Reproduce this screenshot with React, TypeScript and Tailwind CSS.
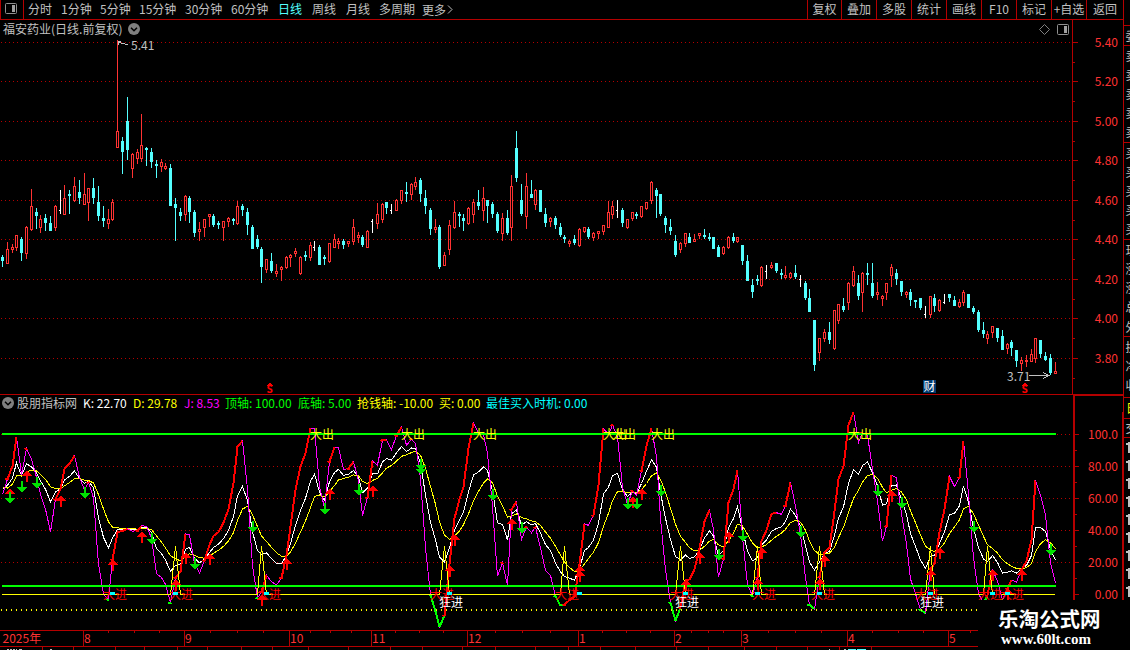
import React from 'react';
import clsx from 'clsx';

type Candle = [kind: string, high: number, top: number, bottom: number, low: number];

const periods = ['分时', '1分钟', '5分钟', '15分钟', '30分钟', '60分钟', '日线', '周线', '月线', '多周期'];
const periodWidths = ['w-[33px]', 'w-[39px]', 'w-[39px]', 'w-[46px]', 'w-[46px]', 'w-[47px]', 'w-[34px]', 'w-[34px]', 'w-[33px]', 'w-[43px]'];
const tools = ['复权', '叠加', '多股', '统计', '画线', 'F10', '标记', '+自选', '返回'];
const toolWidths = ['w-[34px]', 'w-[35px]', 'w-[35px]', 'w-[35px]', 'w-[35px]', 'w-[35px]', 'w-[35px]', 'w-[35px]', 'w-[37px]'];

// kind (r = up, c = down, w = flat), then high / body top / body bottom / low in chart units
const rawCandles = `
c255,257,261,267 r242,249,264,264 r244,247,250,253 r235,235,248,251 c237,239,253,261 r226,227,254,259 r189,206,230,231
c208,212,216,229 r215,219,228,233 c214,218,223,231 c216,223,231,231 r205,206,228,231 w190,210,210,214 r185,198,215,215
c190,194,196,214 r177,186,201,202 c180,192,198,204 r173,194,205,205 r188,188,203,221 c178,188,198,204 c186,202,216,221
c206,218,221,227 r209,219,224,229 r199,202,220,221 r40,131,148,148 c137,141,152,174 c97,121,150,160 r153,154,169,178
r149,152,159,164 r114,145,159,162 c147,148,150,166 c148,152,162,168 c160,164,166,178 r159,162,167,172 r163,166,169,170
c164,168,206,206 c198,204,208,241 c208,212,216,221 r195,196,215,221 c196,198,212,223 c210,212,233,237 r222,229,232,241
r219,219,228,237 r214,214,217,227 c214,216,225,227 c221,223,225,229 r221,221,228,241 r217,218,222,227 c218,219,221,225
r201,206,224,225 c204,206,210,216 c208,212,225,235 c225,227,249,249 c235,239,247,249 c247,249,267,283 r259,259,270,273
c253,261,271,273 r264,271,274,277 r266,267,270,281 r256,257,268,269 r254,255,258,267 r248,251,254,257 r256,257,274,275
c251,255,257,261 r242,245,258,261 w241,247,247,251 c245,247,265,265 c255,257,259,265 r243,243,262,263 r234,239,248,248
r238,241,244,249 c239,241,245,249 r241,241,244,247 r219,227,242,245 r232,235,238,243 c235,237,245,247 r230,231,248,248
w219,221,221,233 r203,214,224,229 r203,204,220,223 c202,202,208,214 w204,210,210,214 r199,200,211,211 r190,190,201,204
c182,192,194,202 r183,184,195,200 r177,182,187,190 c178,180,194,202 c190,198,206,214 c208,210,229,235 r219,227,230,233
c225,227,267,269 r252,255,266,266 r220,225,250,255 r201,212,228,229 c212,214,216,227 c214,218,221,231 r207,208,224,225
r199,202,215,223 c190,202,206,210 r187,198,211,221 c200,200,206,223 c202,204,214,218 c212,214,231,233 r213,218,234,241
c210,218,233,235 r175,186,228,241 c131,148,178,182 c184,200,214,216 r173,186,217,229 c180,194,198,198 r189,190,205,210
c190,190,212,212 c208,214,223,227 r217,218,222,227 c216,218,225,229 c223,227,235,237 c235,237,239,243 r240,241,244,247
c235,239,243,245 r228,229,246,247 r227,227,232,233 c227,229,237,239 r232,233,238,241 r231,231,234,239 r225,225,232,235
r201,212,228,228 r201,206,215,219 w200,210,210,218 c208,210,223,227 r219,219,228,229 r212,212,219,221 c212,214,216,219
r206,206,217,218 r202,202,209,210 r181,182,201,204 c188,190,196,218 c194,194,214,216 c216,218,225,233 c219,227,231,235
c235,241,255,257 r242,243,250,253 r233,233,244,247 c233,237,243,243 r234,239,242,242 r233,233,236,239 c229,235,237,239
c233,237,239,241 c237,237,249,249 c245,247,257,257 r246,247,254,255 r236,237,248,249 c233,237,241,243 r237,237,242,243
c245,245,261,265 c255,261,281,281 c279,285,292,298 c275,279,281,285 r266,267,286,287 w265,271,271,279 r262,265,268,269
c263,263,271,273 c269,273,275,279 r266,275,278,279 r272,273,278,279 c265,273,277,279 w275,279,279,287 c281,283,298,300
c289,298,312,312 c320,320,365,371 r338,338,353,361 r329,332,339,342 c322,332,340,344 r310,310,349,350 r304,304,321,324
c298,306,310,312 r282,283,303,310 r266,271,286,287 c275,283,296,300 r272,273,293,312 c263,273,275,285 c263,283,296,298
r282,292,295,300 r295,296,299,306 r283,283,293,300 r264,267,276,287 c269,273,279,285 c281,281,292,296 r291,292,295,298
c289,292,300,306 c300,300,302,308 c298,298,308,310 w306,314,314,318 r296,296,315,318 c294,298,306,312 r299,300,311,312
w294,302,302,304 c294,294,298,302 c296,300,306,306 r299,302,307,308 r290,292,303,306 c294,294,308,308 c306,308,312,314
c310,312,330,332 c322,330,334,338 r331,334,339,344 r326,326,333,338 c328,328,338,342 c330,336,350,350 r343,344,349,354
c340,342,348,356 c350,350,361,367 r357,360,364,371 r355,360,362,367 r349,354,362,362 r338,338,359,363 c340,340,354,358
c352,356,360,361 c354,358,373,375 r362,371,374,374`;

const candles: Candle[] = rawCandles
  .trim()
  .split(/\s+/)
  .map((s) => {
    const [h, t, b, l] = s.slice(1).split(',').map(Number);
    return [s[0], h, t, b, l];
  });

const xAt = (i: number) => Math.floor(2.42 + i * 4.807);
const yAt = (v: number) => 594.5 - v * 1.6;

// KDJ(9,3,3); the first bars are seeded because their look-back is off screen
const seedK = [65.7, 68.4, 72.6, 82.4, 74.3, 81.6, 79.9, 75.9];
const seedD = [67.3, 66.5, 68.8, 74.3, 74, 76.8, 77.6, 77.2];
const kLine: number[] = [];
const dLine: number[] = [];
candles.forEach(([kind, , top, bottom], i) => {
  if (i < seedK.length) {
    kLine.push(seedK[i]);
    dLine.push(seedD[i]);
    return;
  }
  const win = candles.slice(i - 8, i + 1);
  const high = Math.min(...win.map((c) => c[1]));
  const low = Math.max(...win.map((c) => Math.max(c[4], c[3]))) - 1;
  const close = kind === 'c' ? bottom - 1 : top;
  const rsv = ((low - close) / (low - high)) * 100;
  const k = (kLine[i - 1] * 2 + rsv) / 3;
  kLine.push(k);
  dLine.push((dLine[i - 1] * 2 + k) / 3);
});
const jLine = kLine.map((k, i) => 3 * k - 2 * dLine[i]);

const toPoints = (line: number[]) => line.map((v, i) => `${xAt(i) + 0.5},${yAt(v).toFixed(1)}`).join(' ');

const segments = (line: number[], keep: (i: number) => boolean) => {
  let d = '';
  for (let i = 1; i < line.length; i++) {
    if (!keep(i)) continue;
    const x = xAt(i) + 0.5;
    const y = yAt(line[i]);
    d += keep(i - 1) ? `M${xAt(i - 1) + 0.5},${yAt(line[i - 1])}L${x},${y}` : `M${x - 2},${y + 0.5}L${x + 1},${y}`;
  }
  return d;
};

const buyBars = [36, 54, 92, 117, 141, 157, 170, 193, 205];
const buyPoints = `2,594.5 ${buyBars
  .map((i) => `${xAt(i - 1) + 0.5},594.5 ${xAt(i) + 0.5},546.5 ${xAt(i + 1) + 0.5},594.5`)
  .join(' ')} 1055,594.5`;

const dots = [23, 36, 55, 93, 120, 142, 157, 170, 193, 206, 209];
const upArrows = [
  [10, 488], [27, 470], [61, 495], [113, 559], [142, 531], [176, 579], [186, 552], [210, 553], [262, 594], [287, 558],
  [330, 488], [373, 485], [450, 565], [455, 534], [512, 518], [580, 565], [580, 570], [633, 496], [642, 488], [700, 552],
  [686, 579], [729, 531], [762, 547], [758, 578], [820, 578], [825, 555], [892, 490], [931, 569], [940, 547], [993, 569],
  [1008, 588], [1022, 569],
];
const downArrows = [
  [10, 492], [22, 481], [37, 477], [85, 487], [152, 533], [195, 558], [253, 521], [325, 503], [359, 484], [421, 459],
  [421, 463], [493, 489], [522, 522], [628, 498], [637, 498], [661, 485], [719, 549], [743, 530], [801, 526], [878, 485],
  [902, 497], [974, 521], [1051, 544],
];
const bigIn = [103, 169, 257, 430, 555, 670, 752, 811, 915, 978, 1000];
const bigOut = [310, 401, 473, 603, 612, 651, 848];
const crazyIn = [439, 675, 920];

const priceAxis = [
  ['5.40', 42], ['5.20', 81], ['5.00', 121], ['4.80', 160], ['4.60', 200], ['4.40', 239], ['4.20', 279], ['4.00', 318], ['3.80', 358],
] as [string, number][];
const kdjAxis = [
  ['100.0', 434], ['80.00', 466], ['60.00', 498], ['40.00', 530], ['20.00', 562], ['0.00', 594],
] as [string, number][];

const months = [
  ['8', 83], ['9', 184], ['10', 289], ['11', 371], ['12', 467], ['1', 578], ['2', 674], ['3', 741], ['4', 847], ['5', 948],
] as [string, number][];
const weekTicks = [108, 134, 159, 210, 237, 263, 310, 330, 351, 395, 419, 443, 495, 522, 550, 602, 626, 650, 691, 708, 723, 768, 795, 821, 872, 898, 923, 970];
const footTicks = [42, 73, 115, 144, 177, 207, 241, 272, 308, 348, 390, 422, 462, 495, 535, 568, 600, 635, 676, 708, 744, 776, 807, 839, 871];

const readings = [
  ['K: 22.70', 'text-white w-[50px]'],
  ['D: 29.78', 'text-[#ffff00] w-[51px]'],
  ['J: 8.53', 'text-[#ff00ff] w-[41px]'],
  ['顶轴: 100.00', 'text-[#00ff00] w-[73px]'],
  ['底轴: 5.00', 'text-[#00ff00] w-[59px]'],
  ['抢钱轴: -10.00', 'text-[#ffff00] w-[82px]'],
  ['买: 0.00', 'text-[#ffff00] w-[47px]'],
  ['最佳买入时机: 0.00', 'text-[#00ffff]'],
];

const sideRows = [
  ['委', 36], ['卖', 56], ['卖', 75], ['卖', 94], ['卖', 113], ['卖', 132], ['买', 153], ['买', 172], ['买', 191], ['买', 210],
  ['买', 229], ['现', 250], ['涨', 269], ['涨', 288], ['总', 307], ['外', 327], ['换', 347], ['净', 366], ['收', 385], ['交', 428],
] as [string, number][];

const Collapse = () => (
  <svg width="12" height="12" viewBox="0 0 12 12" className="shrink-0">
    <circle cx="6" cy="6" r="6" fill="#808080" />
    <path d="M3 4.7 6 7.7 9 4.7" fill="none" stroke="#000" strokeWidth="1.5" />
  </svg>
);

const PanelIcon = () => (
  <svg width="12" height="11" viewBox="0 0 12 11" className="shrink-0">
    <rect x="0.5" y="0.5" width="11" height="10" rx="1" fill="none" stroke="#909090" />
    <rect x="7" y="2" width="3" height="7" fill="#a0a0a0" />
  </svg>
);

const Toolbar = () => (
  <div className="flex h-5 border-b border-[#b40000] leading-[18px] text-[#c0c0c0]">
    <div className="w-6 shrink-0 border-x border-[#b40000] pl-1 pt-[3px]">
      <PanelIcon />
    </div>
    <div className="flex grow pl-1">
      {periods.map((p, i) => (
        <span key={p} className={clsx('shrink-0 whitespace-nowrap', periodWidths[i], p === '日线' && 'text-[#54ffff]')}>
          {p}
        </span>
      ))}
      <span className="flex items-center">
        更多
        <svg width="8" height="9" viewBox="0 0 8 9">
          <path d="M2 0.5 6 4.5 2 8.5" fill="none" stroke="#c0c0c0" />
        </svg>
      </span>
    </div>
    {tools.map((t, i) => (
      <span key={t} className={clsx('shrink-0 whitespace-nowrap border-l border-[#b40000] text-center', toolWidths[i])}>
        {t}
      </span>
    ))}
  </div>
);

const PriceChart = () => (
  <svg width="1123" height="354" viewBox="0 40 1123 354" shapeRendering="crispEdges" className="block overflow-visible">
    {priceAxis.map(([label, y]) => (
      <g key={label}>
        <path d={`M1 ${y + 0.5}H1072`} stroke="#b40000" strokeDasharray="1 3" />
        <path d={`M1073 ${y + 0.5}h5M1073 ${y + 20.5}h2`} stroke="#b40000" />
        <text x="1118" y={y + 5} textAnchor="end" fill="#ff3232">{label}</text>
      </g>
    ))}
    <path d="M1072.5 40V394" stroke="#b40000" />
    {candles.map(([kind, h, t, b, l], i) => {
      const x = xAt(i);
      if (kind === 'w') return <path key={i} d={`M${x + 0.5} ${h}V${l}M${x - 1} ${t + 0.5}h1`} stroke="#fff" />;
      if (kind === 'c')
        return <path key={i} d={`M${x} ${h}h1V${l}h-1ZM${x - 1} ${t}h3V${b}h-3Z`} fill="#54ffff" />;
      return (
        <g key={i} stroke="#ff3232" fill="none">
          <path d={`M${x + 0.5} ${h}V${t}M${x + 0.5} ${b}V${l}`} />
          <rect x={x - 0.5} y={t + 0.5} width="2" height={Math.max(b - t - 1, 1)} />
        </g>
      );
    })}
    <path d="M128 44.5h-2l-2-1h-2l-2-1h-2M118 41.5h3M118.5 41v4" fill="none" stroke="#c0c0c0" />
    <text x="131" y="50" fill="#c0c0c0">5.41</text>
    <text x="1007" y="381" fill="#c0c0c0">3.71</text>
    <path d="M1029 375.5H1049M1043 372.5l6 3l-6 3" fill="none" stroke="#c0c0c0" />
    <rect x="923" y="380" width="13" height="13" fill="#003a70" />
    <text x="923.5" y="391" fill="#fff">财</text>
    {[269.5, 1024.5].map((x) => (
      <g key={x}>
        <path d={`M${x - 3} 385.5l3 -3l3 3Z`} fill="#ff0000" />
        <text x={x} y="393" textAnchor="middle" fill="#ff0000" fontSize="10" fontWeight="700">S</text>
      </g>
    ))}
  </svg>
);

const KdjChart = () => (
  <svg width="1123" height="218" viewBox="0 412 1123 218" shapeRendering="crispEdges" className="block">
    {kdjAxis.map(([label, y]) => (
      <g key={label}>
        {y < 594 && <path d={`M1 ${y + 0.5}H1072`} stroke="#b40000" strokeDasharray="1 3" />}
        <path d={`M1075 ${y + 0.5}h4${y < 594 ? `M1075 ${y + 16.5}h2` : ''}`} stroke="#b40000" />
        <text x="1118" y={y + 5} textAnchor="end" fill="#ff3232">{label}</text>
      </g>
    ))}
    <path d="M1074 412V600M1123 412V600" stroke="#b40000" strokeWidth="2" />
    <g fill="none">
      <polyline points={toPoints(kLine)} stroke="#fff" />
      <polyline points={toPoints(dLine)} stroke="#ffff00" />
      <polyline points={toPoints(jLine)} stroke="#ff00ff" />
      <path d={segments(jLine, (i) => jLine[i] < 0)} stroke="#00ff00" strokeWidth="2" />
      <path d={segments(jLine, (i) => i > 0 && jLine[i] > jLine[i - 1])} stroke="#ff0000" strokeWidth="2" />
      <path d="M2 434H1056M2 586H1056" stroke="#00ff00" strokeWidth="2" />
      <path d="M1 610H978" stroke="#ffff00" strokeWidth="2" strokeDasharray="1 4" />
      <polyline points={buyPoints} stroke="#ffff00" />
    </g>
    {bigIn.map((x) => <text key={x} x={x} y="599" fill="#ff0000">大进</text>)}
    {bigOut.map((x) => <text key={x} x={x} y="439" fill="#ffff00">大出</text>)}
    {crazyIn.map((x) => <text key={x} x={x} y="607" fill="#fff">狂进</text>)}
    {upArrows.map(([x, y], i) => (
      <path key={i} d={`M${x} ${y}l5 6h-4v6h-2v-6h-4Z`} fill="#ff0000" />
    ))}
    {downArrows.map(([x, y], i) => (
      <path key={i} d={`M${x - 1} ${y}h2v6h4l-5 6l-5 -6h4Z`} fill="#00e000" />
    ))}
    {dots.map((i) => <rect key={i} x={xAt(i) - 2} y="592" width="5" height="3" fill="#00ffff" />)}
  </svg>
);

const TimeAxis = () => (
  <svg width="1123" height="20" viewBox="0 630 1123 20" shapeRendering="crispEdges" className="block">
    <path d="M0 630.5H978M0 646.5H978" stroke="#b40000" />
    <text x="2.5" y="643" fill="#ff3232">2025年</text>
    {months.map(([label, x]) => (
      <g key={label}>
        <path d={`M${x + 0.5} 631V646`} stroke="#b40000" />
        <text x={x + 1} y="643" fill="#ff3232">{label}</text>
      </g>
    ))}
    {weekTicks.map((x) => <path key={x} d={`M${x + 0.5} 631v2`} stroke="#b40000" />)}
    {footTicks.map((x) => <path key={x} d={`M${x + 0.5} 647v3`} stroke="#b40000" />)}
    <path d="M7 649.5h2m1 0h2m1 0h2m1 0h1m2 0h3M50 649.5h2M829 649.5h1m14 0h2" stroke="#c0c0c0" />
    <path d="M848 649.5h8m1 0h9" stroke="#54ffff" />
  </svg>
);

const SideStrip = () => (
  <svg width="7" height="650" viewBox="1123 0 7 650" shapeRendering="crispEdges" className="block shrink-0">
    <path d="M1123.5 0V394M1124 25.5h6M1124 45.5h6M1124 142.5h6M1124 239.5h6M1124 336.5h6M1124 397.5h6M1124 418.5h6M1124 437.5h6" stroke="#b40000" />
    <path d="M1123 394V600" stroke="#b40000" strokeWidth="2" />
    {sideRows.map(([c, y]) => <text key={y} x="1125.5" y={y + 4.5} fill="#c0c0c0">{c}</text>)}
    <text x="1126" y="413" fill="#ffff00">日</text>
    {[442, 460, 478, 496, 514, 532, 550, 568, 586].map((y) => (
      <path key={y} d={`M1126 ${y + 1}h2v-1h2v11h-2v-8h-2Z`} fill="#c0c0c0" />
    ))}
  </svg>
);

export default function App() {
  return (
    <div className="relative flex h-[650px] w-[1130px] overflow-hidden bg-black font-['Noto_Sans_CJK_SC',sans-serif] text-[12px]">
      <div className="w-[1123px] shrink-0">
        <Toolbar />
        <div className="flex h-5 w-[1073px] items-center gap-[6px] border-r border-[#b40000] px-[3px] pb-[2px] text-[#c0c0c0]">
          <span>福安药业(日线.前复权)</span>
          <Collapse />
          <span className="grow" />
          <svg width="11" height="11" viewBox="0 0 11 11" className="mr-px">
            <path d="M5.5 0.5l5 5l-5 5l-5 -5Z" fill="none" stroke="#808080" />
          </svg>
          <PanelIcon />
        </div>
        <PriceChart />
        <div className="flex h-[18px] leading-[16px]">
          <div className="flex w-[1073px] items-center whitespace-nowrap border-t border-[#b40000] pb-[2px] pl-[2px]">
            <Collapse />
            <span className="ml-[3px] w-[66px] shrink-0 text-[#c0c0c0]">股朋指标网</span>
            {readings.map(([text, cls]) => (
              <span key={text} className={clsx('shrink-0', cls)}>{text}</span>
            ))}
          </div>
          <div className="w-[50px] border-l-2 border-t-2 border-[#b40000]" />
        </div>
        <KdjChart />
        <TimeAxis />
      </div>
      <SideStrip />
      <div className="absolute bottom-0 right-0 flex h-[50px] w-[152px] flex-col bg-black pl-5 pt-[7px] text-white">
        <span className="text-[20.5px] font-bold leading-[22px]">乐淘公式网</span>
        <span className="pl-[3px] font-['Liberation_Serif',serif] text-[15px] font-bold leading-[20px]">www.60lt.com</span>
      </div>
    </div>
  );
}
